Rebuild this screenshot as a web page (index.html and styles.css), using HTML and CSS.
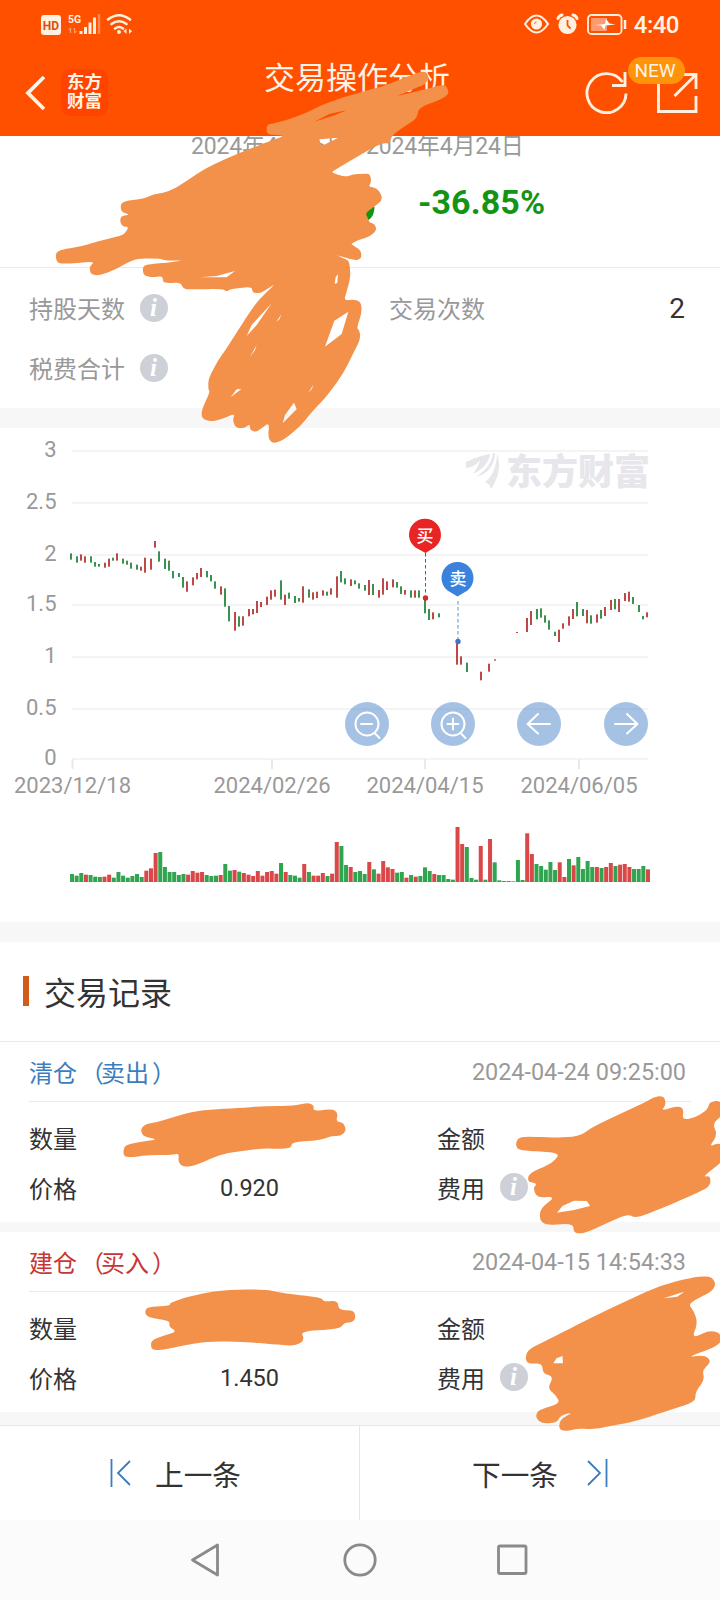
FILE: index.html
```html
<!DOCTYPE html>
<html lang="zh-CN">
<head>
<meta charset="utf-8">
<title>交易操作分析</title>
<link rel="stylesheet" href="styles.css">
</head>
<body>
<div class="page">
  <header class="header">
    <div class="status">
      <svg width="100" height="24" viewBox="40 12 100 24">
        <rect x="41" y="15" width="20" height="20" rx="3" fill="#fff0e0"/>
        <text x="51" y="29.5" class="hd">HD</text>
        <text x="68" y="23" class="fiveg">5G</text>
        <path d="M70.500 28v5M68.500 30l2-2M74.500 33v-5M76.500 31l-2 2" stroke="#ff9a66" stroke-width="1.300" fill="none"/>
        <path d="M81 31v3M85.500 27v7M90 22.500v11.500M94.500 17.500v16.500" stroke="#fff0e0" stroke-width="3"/>
        <path d="M99 14v20" stroke="#ff8550" stroke-width="2.500"/>
        <path d="M108 19.500q11-8.500 22 0M111.500 24q7.500-5.500 15 0M115 28.500q4-3 8 0" stroke="#fff0e0" stroke-width="2.600" fill="none" stroke-linecap="round"/>
        <circle cx="119" cy="32" r="2" fill="#fff0e0"/>
        <path d="M126.500 28.500v5.500l-3-2.700zM129 28.500v5.500l3-2.700z" fill="#fff0e0"/>
      </svg>
      <div class="status-right">
        <svg width="104" height="24" viewBox="524 12 104 24">
          <g fill="none" stroke="#fff0e0" stroke-width="2.200">
            <path d="M526 24q11.500-17 23 0q-11.500 17-23 0z"/>
            <circle cx="537.500" cy="24" r="4.500" fill="#fff0e0"/>
            <path d="M535.500 24q0-2 2-2" stroke="#ff6a20" stroke-width="1"/>
            <path d="M559 18.500q1-3 4-3.500M574 15q3 .5 4 3.500" stroke-width="3" stroke-linecap="round"/>
            <circle cx="568.500" cy="25" r="8" fill="#fff0e0"/>
            <path d="M568.500 20v5.500l3 3" stroke="#ff5000" stroke-width="1.800"/>
            <rect x="589" y="15" width="33.500" height="19" rx="3.500" stroke-width="1.800"/>
          </g>
          <rect x="592" y="18" width="16" height="13" fill="#ff9a70"/>
          <path d="M596 25l10-1 1-5 3.500 4.500 6 1-10 1-1 4.500-3.500-4.500z" fill="#fff"/>
          <path d="M626 20v9" stroke="#fff0e0" stroke-width="2.500"/>
        </svg>
        <span class="clock">4:40</span>
      </div>
    </div>
    <div class="titlebar">
      <svg class="back" width="22" height="36" viewBox="0 0 22 36"><path d="M19 2L3 18l16 16" fill="none" stroke="#fff3e6" stroke-width="3.800"/></svg>
      <div class="logo"><span>东方</span><span>财富</span></div>
      <h1 class="title">交易操作分析</h1>
      <svg class="refresh" width="44" height="44" viewBox="584 69 44 44"><path d="M622.500 81A19.500 19.500 0 1 0 626 92.500M625 71v13.500h-13" fill="none" stroke="#fff0e0" stroke-width="2.900"/></svg>
      <div class="share">
        <svg width="42" height="42" viewBox="656 70 42 42"><path d="M674 73.500H658.500V110.500H696V95M683 73.500h13V88M696 73.500L674.500 95" fill="none" stroke="#fff0e0" stroke-width="2.900"/></svg>
        <span class="badge">NEW</span>
      </div>
    </div>
  </header>

  <section class="profit">
    <div class="dates">2024年4月15日 - 2024年4月24日</div>
    <div class="rate">-36.85%</div>
  </section>
  <section class="stats">
    <div class="stat"><span>持股天数</span><svg class="info"><use href="#info"/></svg></div>
    <div class="stat right"><span>交易次数</span><b class="count">2</b></div>
    <div class="stat"><span>税费合计</span><svg class="info"><use href="#info"/></svg></div>
  </section>

  <section class="chart">
    <svg width="720" height="494" viewBox="0 428 720 494">
      <g id="grid"></g>
      <g class="mark">
        <path d="M466 462q15-7 24-8q-2 13-17 20q6-8 7-14q-5 7-14 8zM493 453q-1 13-17 24q18-5 19-24zM497 454q6 17-6 35q-1-5-6-7q11-8 12-28z"/>
        <text x="506" y="485" textLength="144">东方财富</text>
      </g>
      <g id="candles"></g>
      <path d="M425.500 553v42" stroke="#c03030" stroke-dasharray="3.500 2.500"/>
      <path d="M458 601v38" stroke="#8fb6dc" stroke-width="1.500" stroke-dasharray="3.500 2.500"/>
      <circle cx="425.500" cy="598" r="2.700" fill="#d02c2c"/>
      <circle cx="458" cy="641.500" r="2.700" fill="#3c78c0"/>
      <path d="M425.500 553l-10-5.500a16 16 0 1 1 19 0z" fill="#e82424"/>
      <path d="M457.500 596.500l-10-6a16 16 0 1 1 20 0z" fill="#3a82dc"/>
      <text x="425" y="541.500" class="pin">买</text>
      <text x="458" y="584.500" class="pin">卖</text>
      <g fill="#6496d0" fill-opacity=".58"><circle cx="367" cy="724" r="22"/><circle cx="453" cy="724" r="22"/><circle cx="539" cy="724" r="22"/><circle cx="626" cy="724" r="22"/></g>
      <g fill="none" stroke="#fff" stroke-width="2" stroke-linecap="round" stroke-linejoin="round">
        <circle cx="367" cy="724" r="11.500"/><path d="M361 724h11M374.500 733l5 5"/>
        <circle cx="453" cy="724" r="11.500"/><path d="M447.500 724h11M453 718.500v11M460.500 733l5 5"/>
        <path d="M550 724h-22.500M538 714l-10.500 10 10.500 9.500M615 724h22.500M627 714l10.500 10-10.500 9.500"/>
      </g>
      <g id="volume"></g>
    </svg>
  </section>

  <h2 class="section-title">交易记录</h2>
  <article class="record">
    <div class="record-head"><span class="sell">清仓<span class="paren">（</span>卖出<span class="paren">）</span></span><time>2024-04-24 09:25:00</time></div>
    <div class="record-body">
      <span>数量</span><span></span><span>金额</span><i></i>
      <span>价格</span><span class="num">0.920</span><span>费用</span><svg class="info"><use href="#info"/></svg>
    </div>
  </article>
  <article class="record">
    <div class="record-head"><span class="buy">建仓<span class="paren">（</span>买入<span class="paren">）</span></span><time>2024-04-15 14:54:33</time></div>
    <div class="record-body">
      <span>数量</span><span></span><span>金额</span><i></i>
      <span>价格</span><span class="num">1.450</span><span>费用</span><svg class="info"><use href="#info"/></svg>
    </div>
  </article>
  <div class="pager">
    <div class="prev"><svg width="22" height="30" viewBox="0 0 22 30"><path d="M1.500 1v28M20 3L8 15l12 12" fill="none" stroke="#3a7cc0" stroke-width="1.800"/></svg><span>上一条</span></div>
    <div class="next"><span>下一条</span><svg width="22" height="30" viewBox="0 0 22 30"><path d="M20.500 1v28M2 3l12 12L2 27" fill="none" stroke="#3a7cc0" stroke-width="1.800"/></svg></div>
  </div>
  <nav class="nav">
    <svg width="32" height="36" viewBox="0 0 32 36"><path d="M26.500 3v30L1.500 18z" fill="none" stroke="#8a8a8a" stroke-width="2.800" stroke-linejoin="round"/></svg>
    <svg width="36" height="36" viewBox="0 0 36 36"><circle cx="18" cy="18" r="15.200" fill="none" stroke="#8a8a8a" stroke-width="2.800"/></svg>
    <svg width="32" height="36" viewBox="0 0 32 36"><rect x="2.500" y="4" width="27.500" height="27.500" rx="1.500" fill="none" stroke="#8a8a8a" stroke-width="2.800"/></svg>
  </nav>

  <svg class="scribbles" width="720" height="1600" viewBox="0 0 720 1600">
    <defs><symbol id="info" viewBox="0 0 28 28"><circle cx="14" cy="14" r="14" fill="#cdd0d6"/><text x="13.500" y="21.500" class="info-i">i</text></symbol></defs>
    <path d="M364 207h10.500q0 9-6 13h-4.500z" fill="#149414"/>
    <g id="ink"></g>
  </svg>
</div>
<script src="script.js"></script>
</body>
</html>
```
FILE: styles.css
```css
* { box-sizing: border-box; }
body { margin: 0; font-family: Roboto, "Noto Sans CJK SC", sans-serif; color: #333; background: #fff; }
h1, h2 { margin: 0; font-weight: 400; }
svg { display: block; flex: none; }
.page { position: relative; width: 720px; height: 1600px; overflow: hidden; }
.header { height: 136px; background: #ff5000; color: #fff3e6; }
.status { height: 48px; padding: 0 41px 0 40px; display: flex; align-items: center; justify-content: space-between; }
.status-right { display: flex; align-items: center; gap: 6px; }
.clock { font-size: 24px; line-height: 24px; font-weight: 500; padding-top: 2px; letter-spacing: -.5px; }
.status-right > svg { margin-right: 1px; }
.hd { font-size: 12px; font-weight: 700; text-anchor: middle; fill: #d85010; }
.fiveg { font-size: 10.500px; font-weight: 700; fill: #fff0e0; }
.titlebar { height: 88px; padding-left: 25px; display: flex; align-items: center; }
.back { margin-top: 1px; }
.logo { width: 47px; height: 47px; margin-left: 14px; border-radius: 9px; background: #ff4400; display: flex; flex-direction: column; align-items: center; justify-content: center; font-size: 17.500px; line-height: 19.500px; font-weight: 700; }
.title { width: 187px; margin: 0 0 26px 156px; font-size: 31px; line-height: 40px; white-space: nowrap; }
.refresh { margin-left: 133px; }
.share { position: relative; margin-left: 28px; }
.badge { position: absolute; left: -28px; top: -14px; width: 57px; height: 27px; border-radius: 14px; background: #ff930a; font-size: 19px; line-height: 28px; text-align: center; padding-right: 3px; }
.profit { height: 132px; border-bottom: 1px solid #e9e9e9; overflow: hidden; }
.dates { margin: -6px 0 0 191px; font-size: 23px; line-height: 34px; color: #999; white-space: nowrap; letter-spacing: -.18px; }
.rate { margin: 16px 0 0 418px; font-size: 34px; line-height: 44px; font-weight: 700; color: #149414; letter-spacing: .1px; }
.stats { height: 160px; padding: 10px 35px 0 29px; display: grid; grid-template-columns: 360px 1fr; grid-auto-rows: 60px; border-bottom: 20px solid #f7f7f7; color: #999; font-size: 24px; }
.stat { display: flex; align-items: center; gap: 15px; }
.stat > span { margin-top: -1px; }
.stat.right { justify-content: space-between; }
.count { font-weight: 400; font-size: 28px; color: #333; padding-top: 1px; }
.info { width: 28px; height: 28px; }
.info-i { font: italic bold 25px "Liberation Serif", serif; text-anchor: middle; fill: #fff; }
.chart { height: 514px; border-bottom: 20px solid #f7f7f7; }
.axis { font-size: 22px; fill: #999; }
.mark { fill: #e6e6eb; }
.mark text { font-size: 36px; font-weight: 900; }
.pin { font-size: 17px; font-weight: 500; fill: #fff; text-anchor: middle; }
.section-title { height: 100px; padding: 0 23px 1px; display: flex; align-items: center; gap: 15px; font-size: 32px; border-bottom: 1px solid #e9e9e9; }
.section-title::before { content: ""; width: 6px; height: 30px; background: #cf5c18; }
.record { height: 190px; border-bottom: 10px solid #f7f7f7; font-size: 24px; }
.record-head { height: 60px; margin: 0 29px; display: flex; align-items: center; justify-content: space-between; border-bottom: 1px solid #e9e9e9; }
.record-head time { font-size: 23.400px; color: #999; padding: 1px 5px 0 0; }
.sell { color: #3b7dbd; }
.buy { color: #c93434; }
.paren { position: relative; left: 3px; }
.record-body { padding: 10px 0 0 29px; display: grid; grid-template-columns: 191px 217px 63px 28px; grid-auto-rows: 50px; align-items: center; }
.num { font-size: 23.500px; padding-top: 2px; }
.pager { height: 95px; margin-top: 3px; display: grid; grid-template-columns: 1fr 1fr; border-top: 1px solid #e5e7ea; box-shadow: 0 -4px #f7f7f7; font-size: 28.700px; }
.prev, .next { display: flex; align-items: center; gap: 23px; }
.prev { padding-left: 110px; border-right: 1px solid #e5e7ea; }
.prev span, .next span { padding-top: 1px; }
.next { padding-left: 112px; gap: 28px; }
.nav { height: 80px; padding: 0 192px 0 191px; display: flex; justify-content: space-between; align-items: center; background: #fbfbfb; }
.scribbles { position: absolute; left: 0; top: 0; }
```
FILE: script.js
```javascript
const NS = 'http://www.w3.org/2000/svg';
function add(parent, tag, attrs, text) {
  const el = document.createElementNS(NS, tag);
  for (const k in attrs) el.setAttribute(k, attrs[k]);
  if (text) el.textContent = text;
  document.getElementById(parent).appendChild(el);
}

// Axes
[['3', 451], ['2.5', 503], ['2', 555], ['1.5', 605], ['1', 657], ['0.5', 709], ['0', 759]].forEach(([t, y]) => {
  add('grid', 'path', { d: `M72 ${y}H648`, stroke: '#f4f4f4', 'stroke-width': 2 });
  add('grid', 'text', { x: 56.5, y: y + 6, class: 'axis', 'text-anchor': 'end' }, t);
});
[['2023/12/18', 72.5], ['2024/02/26', 272], ['2024/04/15', 425], ['2024/06/05', 579]].forEach(([t, x]) => {
  add('grid', 'path', { d: `M${x} 759v10`, stroke: '#e9e9e9', 'stroke-width': 2 });
  add('grid', 'text', { x, y: 793, class: 'axis', 'text-anchor': 'middle' }, t);
});

// Candles: colour, x, top, bottom in thirds of a pixel
const RED = '#bd4848', GREEN = '#39924f';
function candles(ox, oy, data) {
  data.split(';').forEach(s => {
    const [x, a, b] = s.slice(1).split(' ').map(Number);
    add('candles', 'rect', { x: ox + x / 3 - 1, y: oy + a / 3, width: 2, height: (b - a) / 3, fill: s[0] === 'r' ? RED : GREEN });
  });
}
candles(60, 520, 'g33 100 119;g51 109 128;r63 103 122;r75 109 128;g93 109 128;g105 126 140;g117 132 140;r135 128 143;r147 116 140;g159 113 122;r171 100 122;g189 116 131;g201 122 134;g213 128 146;g231 134 149;r243 140 152;r255 113 158;r273 116 149;r285 63 83;g297 94 125;g315 116 147;g327 122 152;g339 153 175;g357 159 171;g369 171 203;r381 184 215;r399 172 196;r411 159 178;r423 144 171;g441 153 172;g453 165 184;g465 184 206;r483 199 224;g495 205 260;g507 258 304;r525 276 332;g537 289 320;r549 289 317;r567 267 289;r579 267 283;r591 243 279;r603 246 261;r621 230 255;r633 211 239;r645 209 230;g663 181 239;r675 224 255;g687 218 236;g705 228 249;g717 234 245;r729 199 248;g747 208 233;r759 217 239;r771 215 234;r789 211 227;g801 215 227;r813 205 224;r831 169 233;g843 153 187;g855 175 193;r873 178 198;g885 181 193;g897 190 206');
candles(340, 500, 'g75 255 272;r87 240 285;g99 252 285;r117 270 293;r129 235 284;r141 244 270;r159 238 262;g171 246 263;g183 259 282;r195 270 284;g213 271 293;r225 271 293;g237 271 293;g255 300 340;g267 327 360;r279 337 358;g297 340 352;r351 430 494;r363 469 494;g381 488 516;r423 515 541;r447 491 515;r465 478 482;r531 396 399;r561 354 396;r573 333 375;g591 327 358;g603 325 353;g615 346 368;g627 361 389;g645 395 408;r657 389 426;r669 370 386;r687 349 377;r699 327 357;g711 306 349;g729 327 348;r741 330 370;g753 346 371;r771 343 368;g783 330 356;r795 321 348;r813 300 330;g825 297 328;r837 297 336;r855 279 303;r867 275 305;g879 291 312;g897 315 336;g909 348 358;r921 337 352');

// Volume bars
('g192 g197 g189 r194 g195 g200 g201 r200 r194 g203 g186 g197 g203 g198 g192 g201 r182 r175 r129 g126 g171 g186 g186 g195 g192 r194 r183 r188 r186 g195 g198 g197 r195 g162 g182 r180 g185 r189 r194 r198 r183 r197 r186 r183 r191 g159 r186 g195 g197 g203 r162 g186 r197 r197 r189 g198 r191 r96 g108 g165 ' +
 'r171 g186 g183 g192 r156 g178 r191 r153 r172 r177 g188 g186 r203 g195 r200 g198 g172 g183 r192 g195 g195 g207 g209 r51 r102 g111 g204 g209 r108 g209 r87 g157 g211 g213 g213 g214 g150 g210 r70 r132 g162 g168 g179 g156 g180 r157 r201 g147 r166 g141 g177 g153 g171 r171 g174 r171 r159 g168 r164 r162 r171 g177 g177 g168 r178')
  .split(' ').forEach((s, i) => {
    const h = (216 - s.slice(1)) / 3;
    add('volume', 'rect', { x: 70 + i * 4.645, y: 882 - h, width: 4, height: h, fill: s[0] === 'r' ? '#d94747' : '#30a44e' });
  });

// Marker strokes, closed curves with each corner rounded off
function smooth(list) {
  const n = list.trim().split(/\s+/).map(p => p.split(',').map(Number));
  const lerp = (a, b, t) => `${a[0] + (b[0] - a[0]) * t} ${a[1] + (b[1] - a[1]) * t}`;
  let d = '';
  n.forEach((p, i) => {
    const prev = n[(i + n.length - 1) % n.length], next = n[(i + 1) % n.length];
    d += `${i ? 'L' : 'M'}${lerp(p, prev, .42)}Q${p[0]} ${p[1]} ${lerp(p, next, .42)}`;
  });
  return d + 'Z';
}
function blob(transform, outline, holes = []) {
  add('ink', 'path', {
    transform, 'fill-rule': 'evenodd', fill: '#f3914b',
    d: smooth(outline) + holes.map(h => 'M' + h.split(' ').join('L') + 'Z').join('')
  });
}
blob('translate(40 70) scale(.33333)',
  '680,165 680,192 705,195 735,197 690,213 600,248 500,292 430,340 385,366 340,373 310,387 265,391 242,400 243,425 270,434 243,438 240,455 248,470 265,470 260,483 248,496 180,512 120,530 68,538 46,548 50,578 75,582 165,574 148,590 152,612 175,617 220,602 255,582 292,565 362,566 375,572 434,571 380,578 330,582 308,588 310,617 340,622 368,618 369,637 390,639 422,638 430,657 450,658 548,657 560,665 572,657 635,650 638,668 660,670 685,655 708,640 655,690 620,740 560,835 535,870 505,925 505,960 510,965 485,1020 485,1045 510,1055 545,1048 585,1030 578,1050 587,1073 612,1075 630,1062 630,1080 648,1086 665,1075 688,1057 684,1105 700,1121 730,1110 780,1070 820,1020 860,980 910,910 940,850 962,805 958,780 950,775 966,725 962,695 940,688 912,692 920,665 932,620 928,575 917,567 880,552 945,572 965,565 962,540 935,524 935,520 960,508 990,500 1010,480 1004,462 988,457 984,445 976,430 1000,412 1028,390 1020,365 1005,353 986,350 994,335 990,312 970,311 940,313 915,321 872,307 890,297 985,240 1030,218 1050,222 1055,196 1100,165 1130,145 1137,112 1205,88 1228,70 1218,46 1200,46 1150,60 1070,78 1070,78 1150,45 1166,30 1162,8 1145,4 1100,20 1040,45 980,62 900,85 845,105 800,128 740,150 700,160',
  ['823,155 870,131 920,121 880,137', '838,208 895,203 845,228', '480,622 530,618 585,603 560,622', '887,622 894,612 892,638 884,642',
   '620,798 635,765 695,700 650,765', '708,756 725,733 718,748', '855,830 883,752 925,725 905,792', '630,860 650,825 645,840', '572,982 590,958 604,957', '805,968 820,944 816,956', '728,1060 735,1035 762,998 770,1018']);
const lower = 'translate(0 1080) scale(.45918 .33333)';
blob(lower, '268,218 272,195 300,187 345,178 312,170 306,148 316,133 345,125 400,102 440,90 520,84 580,78 640,78 670,68 684,76 682,93 725,87 736,100 732,125 748,128 754,152 742,168 720,168 700,180 636,187 634,203 610,207 570,205 490,220 460,235 425,257 400,261 388,248 390,220 375,225 325,225 290,231 272,231');
blob(lower, '1123,195 1127,175 1145,169 1200,173 1260,170 1290,142 1340,108 1400,70 1430,48 1447,50 1450,75 1440,92 1475,78 1489,86 1486,120 1515,112 1540,90 1546,65 1570,62 1578,100 1552,130 1562,165 1545,200 1562,190 1578,195 1578,240 1530,290 1547,288 1547,320 1500,350 1450,380 1385,415 1367,402 1320,430 1275,459 1250,460 1248,430 1190,436 1175,420 1177,385 1210,350 1170,353 1161,325 1170,310 1149,305 1152,280 1205,248 1220,217 1130,212', ['1213,398 1225,378 1250,362 1278,363 1285,378 1250,390']);
blob(lower, '315,700 320,680 370,678 370,668 410,650 480,630 575,628 620,640 700,653 705,665 735,662 738,690 770,691 775,712 768,727 750,728 740,747 655,754 663,780 645,797 610,795 530,785 450,784 400,797 350,811 329,808 329,782 350,770 385,755 368,740 370,722 325,713');
blob(lower, '1144,835 1150,808 1200,775 1270,725 1360,665 1440,615 1520,588 1550,591 1559,612 1550,635 1498,670 1512,695 1519,730 1507,775 1545,751 1570,760 1570,795 1495,832 1535,825 1549,845 1530,870 1534,900 1515,935 1514,965 1460,990 1385,1023 1325,1040 1290,1048 1260,1045 1235,1054 1217,1048 1220,1018 1248,997 1222,1005 1212,1028 1180,1031 1166,1012 1172,990 1220,970 1210,945 1193,925 1205,890 1183,880 1180,850 1150,851', ['1205,850 1212,835 1225,828 1226,850', '1445,655 1490,635 1475,650']);
```
